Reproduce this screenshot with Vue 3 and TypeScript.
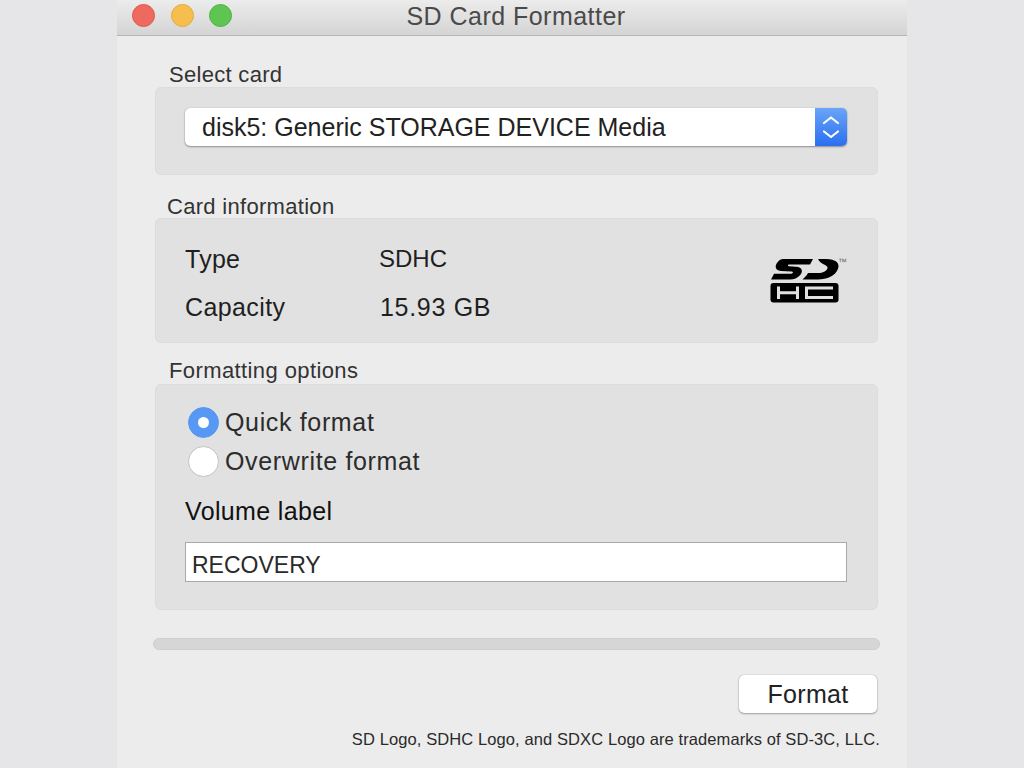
<script setup lang="ts">
const lights: string[] = ['red', 'yellow', 'green']
const rows = [
  { key: 'Type', value: 'SDHC', cls: 'k-type', vcls: 'v-type' },
  { key: 'Capacity', value: '15.93 GB', cls: 'k-cap', vcls: 'v-cap' },
]
</script>

<template>
  <div class="page">
    <div class="window">
      <header class="titlebar">
        <div class="lights">
          <span v-for="l in lights" :key="l" class="light" :class="l"></span>
        </div>
        <div class="title">SD Card Formatter</div>
      </header>
      <main class="content">
        <div class="legend l1">Select card</div>
        <section class="panel p1">
          <div class="select">
            <span class="select-text">disk5: Generic STORAGE DEVICE Media</span>
            <span class="stepper">
              <svg width="32" height="38" viewBox="0 0 32 38" fill="none" stroke="#fff" stroke-width="2.2" stroke-linecap="round" stroke-linejoin="round">
                <path d="M9 15 L16 9.5 L23 15" />
                <path d="M9 23.5 L16 29 L23 23.5" />
              </svg>
            </span>
          </div>
        </section>

        <div class="legend l2">Card information</div>
        <section class="panel p2">
          <div class="info">
            <div v-for="r in rows" :key="r.key" class="info-row">
              <span class="info-key" :class="r.cls">{{ r.key }}</span>
              <span class="info-value" :class="r.vcls">{{ r.value }}</span>
            </div>
          </div>
          <svg class="sd-logo" width="78" height="46" viewBox="0 0 78 46">
            <g transform="scale(1 1.08)">
              <path fill="#000" d="M13 1 H43 L40 6 H19 C17.5 6 17.5 7.6 19 7.6 L26 8 C33 8.4 33 13 30 16 C27.5 18.6 24 20 20 20 H1 L4 14.5 H21 C23.5 14.5 23.5 12.6 21.5 12.5 L11 12 C4 11.5 5 6 8 3.5 C9.5 2 11 1 13 1 Z" />
              <path fill="#000" d="M48 1 H56 C66 1 70 5 68 10 C65.5 16.5 57 20 48 20 H32.5 C36 17 37.5 15 38 14 H48 C53 14 56.5 12 57.5 9.5 C58 8 56 6.5 53 5.5 C51 4.8 49 3 48 1 Z" />
            </g>
            <rect x="0.5" y="25" width="68" height="19.5" rx="3" fill="#000" />
            <path fill="#e1e1e1" d="M7 28.5 H10 V33.2 H26 V28.5 H29 V41 H26 V36.2 H10 V41 H7 Z" />
            <path fill="#e1e1e1" d="M35 28.5 H63 V31.5 H38 V38 H63 V41 H35 Z" />
            <text x="68" y="7" font-size="9" font-family="Liberation Sans, sans-serif" fill="#666">™</text>
          </svg>
        </section>

        <div class="legend l3">Formatting options</div>
        <section class="panel p3">
          <label class="radio-row first">
            <span class="radio on"><span class="dot"></span></span>
            <span class="radio-text">Quick format</span>
          </label>
          <label class="radio-row">
            <span class="radio"></span>
            <span class="radio-text">Overwrite format</span>
          </label>
          <div class="vol-label">Volume label</div>
          <div class="input">RECOVERY</div>
        </section>

        <div class="progress"></div>

        <div class="actions">
          <button class="format" type="button">Format</button>
        </div>
        <div class="footer">SD Logo, SDHC Logo, and SDXC Logo are trademarks of SD-3C, LLC.</div>
      </main>
    </div>
  </div>
</template>

<style>
html, body { margin: 0; background: #e6e6e8; }
</style>

<style scoped>
.page {
  width: 1024px;
  height: 768px;
  overflow: hidden;
  background: #e6e6e8;
  font-family: "Liberation Sans", Arial, sans-serif;
  color: #2a2a2a;
  display: flex;
  justify-content: center;
}
.window {
  width: 790px;
  height: 768px;
  background: #ececec;
  display: flex;
  flex-direction: column;
}
.titlebar {
  height: 36px;
  flex: none;
  box-sizing: border-box;
  position: relative;
  background: linear-gradient(#ececec, #d4d4d4);
  border-bottom: 1px solid #b4b4b4;
  display: flex;
  align-items: center;
  justify-content: center;
}
.lights {
  position: absolute;
  left: 15px;
  top: 4px;
  display: flex;
  gap: 15.5px;
}
.light {
  width: 23px;
  height: 23px;
  border-radius: 50%;
  box-sizing: border-box;
}
.red { background: #ee6a5f; border: 1px solid #e0574d; }
.yellow { background: #f5be4f; border: 1px solid #e4ab3e; }
.green { background: #5fc552; border: 1px solid #51b145; }
.title {
  font-size: 25px;
  line-height: 30px;
  letter-spacing: 0.47px;
  color: #4a4a4a;
  margin-top: -4px;
  margin-left: 8px;
}
.content {
  flex: 1;
  display: flex;
  flex-direction: column;
  padding: 0 27px 0 36px;
  box-sizing: border-box;
}
.legend {
  font-size: 22px;
  line-height: 24px;
  letter-spacing: 0.3px;
  color: #333;
}
.l1 { margin: 27px 0 0 16px; }
.l2 { margin: 20px 0 -1px 14px; }
.l3 { margin: 16px 0 1px 16px; letter-spacing: 0.4px; }
.panel {
  margin-left: 2px;
  width: 723px;
  box-sizing: border-box;
  background: #e1e1e1;
  border: 1px solid #dcdcdc;
  border-radius: 6px;
}
.p1 { height: 88px; padding: 20px 29px 0; }
.select {
  width: 662px;
  height: 38px;
  background: #fff;
  border-radius: 5px;
  box-shadow: 0 0 1px rgba(0, 0, 0, 0.3), 0 1px 2px rgba(0, 0, 0, 0.35);
  display: flex;
  justify-content: space-between;
  align-items: center;
  overflow: hidden;
}
.select-text {
  font-size: 25px;
  padding: 1px 0 0 17px;
  color: #222;
}
.stepper {
  width: 32px;
  height: 38px;
  background: linear-gradient(#6aa5f8, #2a6ff0);
  display: block;
}
.stepper svg { display: block; }
.p2 {
  height: 125px;
  display: flex;
  justify-content: space-between;
  padding: 0 29px 0 29px;
}
.info { padding-top: 20px; }
.info-row {
  display: flex;
  height: 48px;
  font-size: 25px;
  line-height: 40px;
  color: #1f1f1f;
}
.info-key { width: 194px; }
.k-type { letter-spacing: 0.25px; }
.k-cap { letter-spacing: 0.4px; }
.v-type { font-size: 24px; }
.v-cap { letter-spacing: 0.7px; margin-left: 1px; }
.sd-logo { margin-top: 39px; }
.p3 {
  height: 226px;
  padding: 21px 31px 0 29px;
}
.radio-row {
  display: flex;
  align-items: center;
  height: 32px;
  margin-bottom: 7px;
  margin-left: 3px;
  gap: 6px;
}
.radio {
  width: 31px;
  height: 31px;
  box-sizing: border-box;
  border-radius: 50%;
  background: #fff;
  border: 1px solid #c2c2c2;
  display: flex;
  align-items: center;
  justify-content: center;
}
.radio.on {
  background: #5898f5;
  border-color: #5898f5;
}
.dot {
  width: 11px;
  height: 11px;
  border-radius: 50%;
  background: #fff;
}
.radio-text {
  font-size: 25px;
  letter-spacing: 0.65px;
  color: #2c2c2c;
}
.vol-label {
  font-size: 25px;
  line-height: 30px;
  letter-spacing: 0.35px;
  color: #111;
  margin-top: 19px;
}
.input {
  margin-top: 16px;
  width: 662px;
  height: 40px;
  box-sizing: border-box;
  background: #fff;
  border: 1px solid #a9a9a9;
  font-size: 23px;
  line-height: 44px;
  padding-left: 6px;
  color: #2a2a2a;
}
.progress {
  margin-top: 28px;
  width: 727px;
  height: 12px;
  box-sizing: border-box;
  background: #d6d6d6;
  border: 1px solid #cfcfcf;
  border-radius: 6px;
}
.actions {
  display: flex;
  justify-content: flex-end;
  width: 724px;
  margin-top: 25px;
}
.format {
  width: 138px;
  height: 38px;
  background: #fff;
  border: none;
  border-radius: 5px;
  box-shadow: 0 0 1px rgba(0, 0, 0, 0.4), 0 1px 2px rgba(0, 0, 0, 0.3);
  font-family: inherit;
  font-size: 25px;
  letter-spacing: 0.3px;
  color: #222;
  padding: 0;
}
.footer {
  width: 727px;
  text-align: right;
  font-size: 16.5px;
  letter-spacing: 0.1px;
  line-height: 20px;
  margin-top: 16px;
  color: #2a2a2a;
}
</style>
